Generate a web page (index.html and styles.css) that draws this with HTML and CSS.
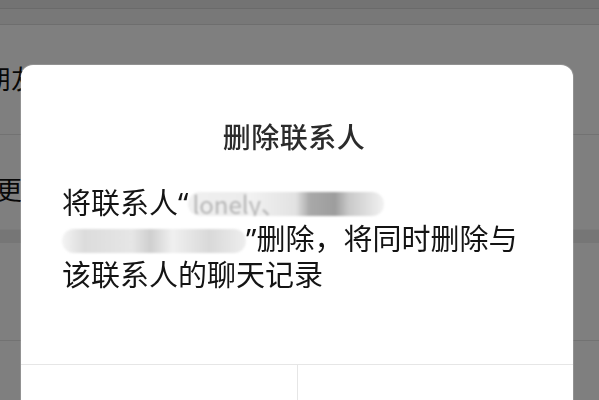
FILE: index.html
```html
<!DOCTYPE html>
<html lang="zh-CN">
<head>
    <meta charset="UTF-8">
    <meta name="viewport" content="width=device-width, initial-scale=1.0">
    <title>删除联系人</title>
    <link rel="stylesheet" href="styles.css">
</head>
<body>
    <div class="page">
        <div class="status-bar"></div>
        <div class="nav-bar"></div>
        <div class="cell cell-tall">
            <span class="cell-label">朋友权限</span>
        </div>
        <div class="cell cell-more">
            <span class="cell-label cell-label-more">更多信息</span>
        </div>
        <div class="section-gap"></div>
        <div class="cell cell-plain"></div>
        <div class="cell cell-plain"></div>
    </div>

    <div class="mask"></div>

    <div class="dialog">
        <div class="dialog-body">
            <h2 class="dialog-title">删除联系人</h2>
            <p class="dialog-text">
                <span class="line">将联系人<span class="quote">“</span><span class="blur blur-first">lonely、</span></span>
                <span class="line"><span class="blur blur-second"></span><span class="quote">”</span>删除，将同时删除与</span>
                <span class="line">该联系人的聊天记录</span>
            </p>
        </div>
        <div class="dialog-actions">
            <button class="dialog-btn">取消</button>
            <button class="dialog-btn dialog-btn-danger">删除</button>
        </div>
    </div>
</body>
</html>
```

FILE: styles.css
```css
body {
    font-family: "Noto Sans CJK SC", "Noto Sans", sans-serif;
    margin: 0;
    padding: 0;
    background-color: #ffffff;
    overflow: hidden;
}

.page {
    height: 400px;
    background-color: #ffffff;
    color: #111111;
}

.status-bar {
    height: 8px;
    background-color: #e6e6e6;
    border-bottom: 1px solid #d4d4d4;
}

.nav-bar {
    height: 15px;
    background-color: #f1f1f1;
    border-bottom: 1px solid #dddddd;
}

.cell {
    display: flex;
    align-items: center;
    background-color: #ffffff;
    border-bottom: 1px solid #e4e4e4;
}

.cell-tall {
    height: 110px;
    padding-bottom: 4px;
    box-sizing: border-box;
}

.cell-more {
    height: 94px;
    padding-top: 12px;
    box-sizing: border-box;
    border-bottom: none;
}

.cell-label {
    font-size: 26px;
    margin-left: -15px;
    white-space: nowrap;
}

.cell-label-more {
    margin-left: -4px;
}

.section-gap {
    height: 13px;
    background-color: #ececec;
    border-top: 1px solid #f6f6f6;
}

.cell-plain {
    height: 97px;
}

.mask {
    position: fixed;
    inset: 0;
    background-color: rgba(0, 0, 0, 0.5);
}

.dialog {
    position: absolute;
    left: 21px;
    top: 65px;
    width: 552px;
    background-color: #ffffff;
    border-radius: 12px;
    box-shadow: 0 0 0 1px rgba(255, 255, 255, 0.15);
}

.dialog-body {
    height: 300px;
    box-sizing: border-box;
    padding: 54px 41px 0;
    border-bottom: 1px solid #e6e6e6;
}

.dialog-title {
    margin: 0 -12px 0 -18px;
    font-size: 28px;
    line-height: 34px;
    font-weight: 500;
    letter-spacing: 0.5px;
    color: #2b2b2b;
    text-align: center;
}

.dialog-text {
    margin: 31px 0 0;
    font-size: 29px;
    line-height: 34px;
    color: #141414;
}

.line {
    display: block;
    white-space: nowrap;
}

.quote {
    font-family: "Noto Sans", "DejaVu Sans", sans-serif;
}

.blur {
    display: inline-block;
    vertical-align: middle;
    height: 24px;
    border-radius: 12px;
    color: #b5b5b5;
    font-size: 24px;
    line-height: 24px;
    overflow: hidden;
    filter: blur(1px);
}

.blur-first {
    width: 196px;
    margin-top: -4px;
    background: linear-gradient(90deg, #f0f0f0 0, #ececec 30%, #f3f3f3 30%, #e2e2e2 55%, #a9a9a9 62%, #9d9d9d 75%, #c9c9c9 82%, #f2f2f2 100%);
    text-indent: 4px;
}

.blur-second {
    width: 184px;
    margin-top: -2px;
    background: linear-gradient(90deg, #f4f4f4 0, #dcdcdc 12%, #e6e6e6 38%, #cfcfcf 48%, #f0f0f0 60%, #d9d9d9 80%, #eeeeee 100%);
}

.dialog-actions {
    display: flex;
    height: 64px;
}

.dialog-btn {
    flex: 1;
    border: none;
    background: none;
    font-family: inherit;
    font-size: 28px;
    color: #222222;
    padding: 32px 0 0;
    line-height: 34px;
    align-self: flex-start;
}

.dialog-btn + .dialog-btn {
    border-left: 1px solid #e6e6e6;
    height: 64px;
}

.dialog-btn-danger {
    color: #e64340;
}
```
